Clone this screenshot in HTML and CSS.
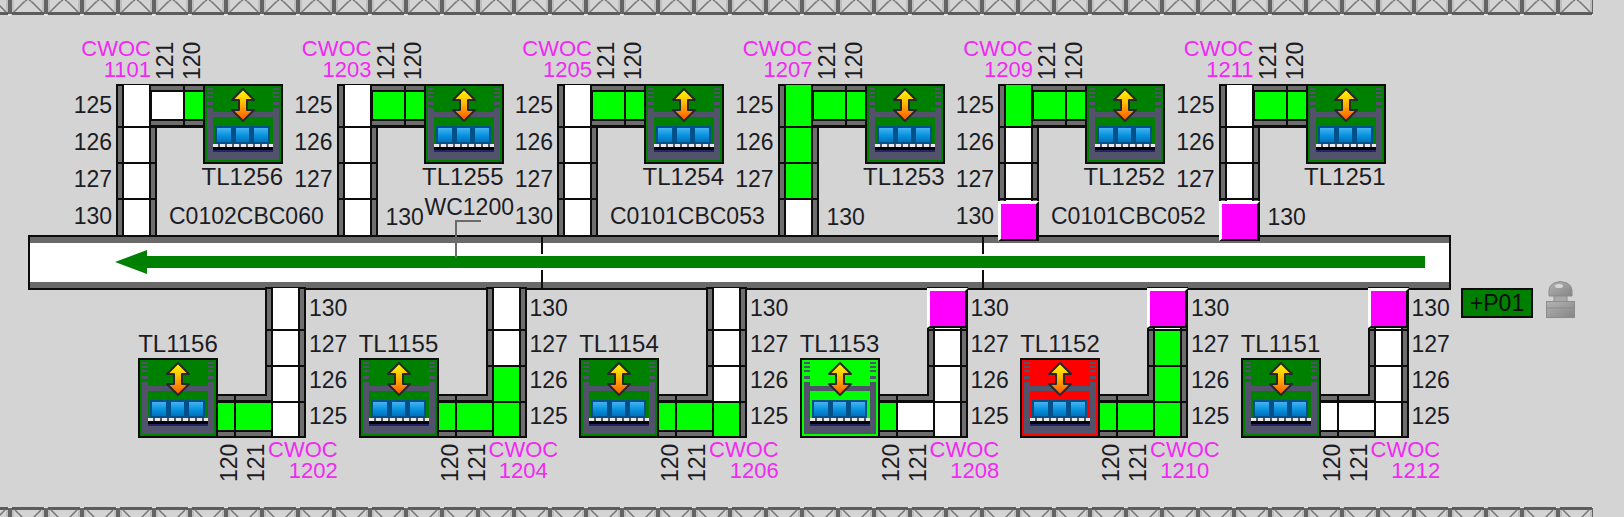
FILE: index.html
```html
<!DOCTYPE html>
<html lang="en">
<head>
<meta charset="utf-8">
<title>Conveyor WC1200 overview</title>
<link rel="stylesheet" href="styles.css">
</head>
<body>
<svg class="defs" aria-hidden="true">
  <defs>
    <linearGradient id="arrow-fill" x1="0" y1="0" x2="0" y2="1"><stop offset="0.1" stop-color="#fff000"/><stop offset="0.5" stop-color="#ffb000"/><stop offset="0.9" stop-color="#ff6400"/></linearGradient>
    <linearGradient id="box-fill" x1="0" y1="0" x2="0" y2="1"><stop offset="0" stop-color="#45b4f2"/><stop offset="0.5" stop-color="#0a94e0"/><stop offset="1" stop-color="#0070bc"/></linearGradient>
    <linearGradient id="lamp-fill" x1="0" y1="0" x2="1" y2="1"><stop offset="0" stop-color="#b4b4b4"/><stop offset="1" stop-color="#858585"/></linearGradient>
    <pattern id="fence-top" x="8" y="0" width="36" height="16" patternUnits="userSpaceOnUse">
      <rect x="0" width="4" height="14" fill="#646464"/>
      <rect x="4" y="12" width="32" height="3" fill="#5c5c5c"/>
      <path d="M5 0V12M35 0V12" stroke="#a8a8a8" stroke-width="1"/>
      <path d="M6 12L16 2H17M34 12L24 2H23M17 1L19 0M23 1L21 0" stroke="#777" stroke-width="1.5" fill="none"/>
      <rect x="0" y="14" width="3" height="2" fill="#e6e6e6"/>
    </pattern>
    <pattern id="fence-bottom" x="8" y="0" width="36" height="12" patternUnits="userSpaceOnUse">
      <rect x="0" y="1" width="4" height="11" fill="#646464"/>
      <rect x="4" y="0" width="32" height="3" fill="#5c5c5c"/>
      <path d="M5 3V12M35 3V12" stroke="#a8a8a8" stroke-width="1"/>
      <path d="M7 3L16 12M33 3L24 12" stroke="#777" stroke-width="1.5" fill="none"/>
      <rect x="0" y="0" width="3" height="1" fill="#e6e6e6"/>
    </pattern>
    <symbol id="pipe-up" viewBox="0 0 88 151">
      <path fill="#0c0c0c" d="M0 0H88V44H41V151H0Z"/>
      <path fill="#6e6e6e" d="M2 2H6V151H2ZM35 44H39V151H35ZM35 2H88V6H35ZM35 37H88V41H35Z"/>
      <path fill="#fff" d="M8 1H33V151H8ZM36 8H88V35H36Z"/>
      <path fill="#0c0c0c" d="M0 42H41V44H0ZM0 78H41V80H0ZM0 114H41V116H0ZM67 0H69V44H67Z"/>
    </symbol>
    <symbol id="pipe-down" viewBox="0 0 88 151">
      <path fill="#0c0c0c" d="M47 0H88V151H0V107H47Z"/>
      <path fill="#6e6e6e" d="M49 2H53V109H49ZM82 2H86V149H82ZM0 109H53V113H0ZM0 145H53V149H0Z"/>
      <path fill="#fff" d="M55 1H80V149H55ZM0 116H53V143H0Z"/>
      <path fill="#0c0c0c" d="M47 42H88V44H47ZM47 78H88V80H47ZM47 114H88V116H47ZM16 107H18V151H16Z"/>
    </symbol>
    <symbol id="block" viewBox="0 0 41 40">
      <rect width="41" height="40" fill="#0c0c0c"/>
      <path fill="#fff" d="M0 0H41L38 3H3V38L0 40Z"/>
      <rect x="3" y="3" width="35" height="35" fill="#f0f"/>
    </symbol>
    <symbol id="lift" viewBox="0 0 80 80">
      <rect x="1" y="1" width="78" height="78" fill="currentColor" stroke="#0c0c0c" stroke-width="2"/>
      <path fill="#52526a" d="M4 24H10V67H70V24H76V76H4ZM10 28H70V33H10ZM4 4H10V6H4ZM4 8H10V10H4ZM4 12H10V14H4ZM4 18H10V21H4ZM70 4H76V6H70ZM70 8H76V10H70ZM70 12H76V14H70ZM70 18H76V21H70Z"/>
      <rect x="12" y="42" width="55" height="18" fill="#00508a"/>
      <path fill="url(#box-fill)" d="M14 44H28V58H14ZM33 44H46V58H33ZM51 44H65V58H51Z"/>
      <rect x="10" y="60" width="60" height="3" fill="#52526a"/>
      <path stroke="#e8e8e8" stroke-width="3" stroke-dasharray="5 2" d="M10 61.500H70"/>
      <rect x="10" y="63" width="60" height="3" fill="#000"/>
      <rect x="10" y="66" width="60" height="2" fill="#202468"/>
      <path fill="url(#arrow-fill)" stroke="#28282c" stroke-width="2" stroke-linejoin="round" d="M40 5L51 16H44V26H51L40 37L29 26H36V16H29Z"/>
    </symbol>
  </defs>
</svg>

<main class="plant">
  <svg class="fence fence--top" aria-hidden="true"><rect width="100%" height="16" fill="url(#fence-top)"/></svg>

  <section class="row row--upper">
    <article class="station station--upper">
      <header class="head"><p class="order">CWOC<br>1101</p><span class="turned">121</span><span class="turned">120</span></header>
      <ol class="cells"><li>125</li><li>126</li><li>127</li><li>130</li></ol>
      <svg class="pipe" viewBox="0 0 88 151"><use href="#pipe-up" width="88" height="151"/><path class="on" d="M69 8h19v27h-19z"/></svg>
      <div class="unit"><svg class="lift"><use href="#lift"/></svg><h2 class="name">TL1256</h2></div>
      <p class="foot foot--section">C0102CBC060</p>
    </article>
    <article class="station station--upper">
      <header class="head"><p class="order">CWOC<br>1203</p><span class="turned">121</span><span class="turned">120</span></header>
      <ol class="cells"><li>125</li><li>126</li><li>127</li></ol>
      <svg class="pipe" viewBox="0 0 88 151"><use href="#pipe-up" width="88" height="151"/><path class="on" d="M36 8h31v27h-31zM69 8h19v27h-19z"/></svg>
      <div class="unit"><svg class="lift"><use href="#lift"/></svg><h2 class="name">TL1255</h2></div>
      <p class="foot">130</p>
      <div class="callout">WC1200<svg class="leader" viewBox="0 0 26 38"><path d="M26 1H1V38" fill="none" stroke="#6a6a6a" stroke-width="2"/></svg></div>
    </article>
    <article class="station station--upper">
      <header class="head"><p class="order">CWOC<br>1205</p><span class="turned">121</span><span class="turned">120</span></header>
      <ol class="cells"><li>125</li><li>126</li><li>127</li><li>130</li></ol>
      <svg class="pipe" viewBox="0 0 88 151"><use href="#pipe-up" width="88" height="151"/><path class="on" d="M36 8h31v27h-31zM69 8h19v27h-19z"/></svg>
      <div class="unit"><svg class="lift"><use href="#lift"/></svg><h2 class="name">TL1254</h2></div>
      <p class="foot foot--section">C0101CBC053</p>
    </article>
    <article class="station station--upper">
      <header class="head"><p class="order">CWOC<br>1207</p><span class="turned">121</span><span class="turned">120</span></header>
      <ol class="cells"><li>125</li><li>126</li><li>127</li></ol>
      <svg class="pipe" viewBox="0 0 88 151"><use href="#pipe-up" width="88" height="151"/><path class="on" d="M8 1h25v41h-25zM8 44h25v34h-25zM8 80h25v34h-25zM36 8h31v27h-31zM69 8h19v27h-19z"/></svg>
      <div class="unit"><svg class="lift"><use href="#lift"/></svg><h2 class="name">TL1253</h2></div>
      <p class="foot">130</p>
    </article>
    <article class="station station--upper">
      <header class="head"><p class="order">CWOC<br>1209</p><span class="turned">121</span><span class="turned">120</span></header>
      <ol class="cells"><li>125</li><li>126</li><li>127</li><li>130</li></ol>
      <svg class="pipe" viewBox="0 0 88 151"><use href="#pipe-up" width="88" height="151"/><path class="on" d="M8 1h25v41h-25zM36 8h31v27h-31zM69 8h19v27h-19z"/><use href="#block" y="117" width="41" height="40"/></svg>
      <div class="unit"><svg class="lift"><use href="#lift"/></svg><h2 class="name">TL1252</h2></div>
      <p class="foot foot--section">C0101CBC052</p>
    </article>
    <article class="station station--upper">
      <header class="head"><p class="order">CWOC<br>1211</p><span class="turned">121</span><span class="turned">120</span></header>
      <ol class="cells"><li>125</li><li>126</li><li>127</li></ol>
      <svg class="pipe" viewBox="0 0 88 151"><use href="#pipe-up" width="88" height="151"/><path class="on" d="M36 8h31v27h-31zM69 8h19v27h-19z"/><use href="#block" y="117" width="41" height="40"/></svg>
      <div class="unit"><svg class="lift"><use href="#lift"/></svg><h2 class="name">TL1251</h2></div>
      <p class="foot">130</p>
    </article>
  </section>

  <section class="belt" aria-label="WC1200">
    <div class="belt-part belt-part--a"></div>
    <div class="belt-part belt-part--b"></div>
    <div class="belt-part belt-part--c"></div>
    <div class="flow">
      <svg class="flow-head" viewBox="0 0 32 24"><path d="M0 12L32 0V24Z" fill="#008000"/></svg>
      <div class="flow-line"></div>
    </div>
  </section>

  <section class="lower">
    <div class="row row--lower">
      <article class="station station--lower">
        <h2 class="name">TL1156</h2>
        <svg class="lift"><use href="#lift"/></svg>
        <svg class="pipe" viewBox="0 0 88 151"><use href="#pipe-down" width="88" height="151"/><path class="on" d="M0 116h16v27h-16zM18 116h35v27h-35z"/></svg>
        <ol class="cells"><li>130</li><li>127</li><li>126</li><li>125</li></ol>
        <footer class="tail"><span class="turned">120</span><span class="turned">121</span><p class="order">CWOC<br>1202</p></footer>
      </article>
      <article class="station station--lower">
        <h2 class="name">TL1155</h2>
        <svg class="lift"><use href="#lift"/></svg>
        <svg class="pipe" viewBox="0 0 88 151"><use href="#pipe-down" width="88" height="151"/><path class="on" d="M0 116h16v27h-16zM18 116h35v27h-35zM55 80h25v34h-25zM55 116h25v33h-25z"/></svg>
        <ol class="cells"><li>130</li><li>127</li><li>126</li><li>125</li></ol>
        <footer class="tail"><span class="turned">120</span><span class="turned">121</span><p class="order order--centred">CWOC<br>1204</p></footer>
      </article>
      <article class="station station--lower">
        <h2 class="name">TL1154</h2>
        <svg class="lift"><use href="#lift"/></svg>
        <svg class="pipe" viewBox="0 0 88 151"><use href="#pipe-down" width="88" height="151"/><path class="on" d="M0 116h16v27h-16zM18 116h35v27h-35zM55 116h25v33h-25z"/></svg>
        <ol class="cells"><li>130</li><li>127</li><li>126</li><li>125</li></ol>
        <footer class="tail"><span class="turned">120</span><span class="turned">121</span><p class="order">CWOC<br>1206</p></footer>
      </article>
      <article class="station station--lower">
        <h2 class="name">TL1153</h2>
        <svg class="lift lift--active"><use href="#lift"/></svg>
        <svg class="pipe" viewBox="0 0 88 151"><use href="#pipe-down" width="88" height="151"/><path class="on" d="M0 116h16v27h-16z"/><use href="#block" x="47" y="1" width="41" height="40"/></svg>
        <ol class="cells"><li>130</li><li>127</li><li>126</li><li>125</li></ol>
        <footer class="tail"><span class="turned">120</span><span class="turned">121</span><p class="order">CWOC<br>1208</p></footer>
      </article>
      <article class="station station--lower">
        <h2 class="name">TL1152</h2>
        <svg class="lift lift--fault"><use href="#lift"/></svg>
        <svg class="pipe" viewBox="0 0 88 151"><use href="#pipe-down" width="88" height="151"/><path class="on" d="M0 116h16v27h-16zM18 116h35v27h-35zM55 44h25v34h-25zM55 80h25v34h-25zM55 116h25v33h-25z"/><use href="#block" x="47" y="1" width="41" height="40"/></svg>
        <ol class="cells"><li>130</li><li>127</li><li>126</li><li>125</li></ol>
        <footer class="tail"><span class="turned">120</span><span class="turned">121</span><p class="order order--centred">CWOC<br>1210</p></footer>
      </article>
      <article class="station station--lower">
        <h2 class="name">TL1151</h2>
        <svg class="lift"><use href="#lift"/></svg>
        <svg class="pipe" viewBox="0 0 88 151"><use href="#pipe-down" width="88" height="151"/><use href="#block" x="47" y="1" width="41" height="40"/></svg>
        <ol class="cells"><li>130</li><li>127</li><li>126</li><li>125</li></ol>
        <footer class="tail"><span class="turned">120</span><span class="turned">121</span><p class="order">CWOC<br>1212</p></footer>
      </article>
    </div>
    <aside class="panel">
      <button class="panel-tag" type="button">+P01</button>
      <svg class="lamp" viewBox="0 0 29 37" role="img" aria-label="Beacon">
        <path d="M3 15V9Q3 5 8 2Q14 -1 21 2Q26 5 26 9V15Z" fill="url(#lamp-fill)" stroke="#8c8c8c"/>
        <ellipse cx="13" cy="5" rx="4" ry="2" fill="#d8d8d8"/>
        <rect x="8" y="15" width="13" height="6" fill="#a8a8a8" stroke="#8c8c8c"/>
        <rect x="0.500" y="20.500" width="28" height="16" fill="url(#lamp-fill)" stroke="#8c8c8c"/>
        <path d="M1 27H28" stroke="#8a8a8a"/>
      </svg>
    </aside>
  </section>

  <svg class="fence fence--bottom" aria-hidden="true"><rect width="100%" height="12" fill="url(#fence-bottom)"/></svg>
</main>
</body>
</html>
```
FILE: styles.css
```css
* {
  box-sizing: border-box;
}

body {
  margin: 0;
  background: #d4d4d4;
  color: #1c1c24;
  font: 23px/26px "Liberation Sans", Arial, sans-serif;
  overflow: hidden;
}

p, h2, ol {
  margin: 0;
  padding: 0;
  font: inherit;
  list-style: none;
}

svg {
  display: block;
}

.defs {
  position: absolute;
  width: 0;
  height: 0;
}

.plant {
  display: flex;
  flex-direction: column;
}

.fence {
  width: calc(100% - 31px);
  height: 16px;
}

.fence--bottom {
  height: 10px;
  margin-top: 25px;
}

.row {
  display: grid;
  grid-template-columns: repeat(6, 1fr);
  position: relative;
  z-index: 1;
}

.row--upper {
  padding: 22px 229px 0 72px;
}

.station {
  display: grid;
  position: relative;
  white-space: nowrap;
}

.station--upper {
  grid-template-columns: 44px 41px 46px 80px;
  grid-template-rows: 46px 151px;
}

.head {
  grid-area: 1 / 1 / 2 / 5;
  display: flex;
  gap: 7px;
}

.order {
  color: #f328f3;
  font-size: 22px;
  line-height: 21px;
  text-align: right;
}

.head .order {
  width: 79px;
  margin-right: -3px;
}

.order--centred {
  text-align: center;
}

.turned {
  writing-mode: vertical-rl;
  transform: rotate(180deg);
  line-height: 20px;
}

.head .turned {
  padding-top: 4px;
}

.cells {
  line-height: 36px;
}

.station--upper .cells {
  grid-area: 2 / 1;
  padding: 3px 4px 0 0;
  line-height: 37px;
  text-align: right;
}

.pipe {
  width: 88px;
  height: 151px;
  overflow: visible;
}

.on {
  fill: #00ff00;
}

.station--upper .pipe {
  grid-area: 2 / 2;
}

.unit {
  grid-area: 2 / 4;
  position: relative;
}

.lift {
  width: 80px;
  height: 80px;
  color: #008000;
}

.lift--active {
  color: #00ff00;
}

.lift--fault {
  color: #ff0000;
}

.name {
  font-size: 24px;
  text-align: center;
}

.unit .name {
  display: flex;
  justify-content: flex-end;
}

.foot {
  grid-area: 2 / 3 / 3 / 5;
  align-self: end;
  padding-left: 8px;
  line-height: 36px;
}

.foot--section {
  padding-left: 12px;
  padding-bottom: 1px;
}

.callout {
  position: absolute;
  left: 132px;
  top: 156px;
}

.leader {
  width: 26px;
  height: 38px;
  margin-left: 30px;
}

.belt {
  display: flex;
  position: relative;
  height: 55px;
  margin: 0 173px 0 28px;
  border: 2px solid #0c0c0c;
}

.belt-part {
  border-style: solid;
  border-color: #6a6a6a;
  border-width: 6px 0;
  background: #fff;
  position: relative;
}

.belt-part--a {
  flex: 512;
}

.belt-part--b {
  flex: 441;
}

.belt-part--c {
  flex: 468;
}

.belt-part + .belt-part::before {
  content: "";
  position: absolute;
  inset: -6px auto -6px 0;
  width: 2px;
  background: #0c0c0c;
}

.flow {
  position: absolute;
  inset: 13px 24px auto 85px;
  display: flex;
  align-items: center;
}

.flow-head {
  width: 32px;
  height: 24px;
}

.flow-line {
  flex: 1;
  height: 16px;
  border: solid #fff;
  border-width: 2px 0;
  background: #008000;
}

.lower {
  display: flex;
  margin-top: -3px;
}

.row--lower {
  flex: 1;
  padding-left: 138px;
}

.station--lower {
  grid-template-columns: 80px 88px 1fr;
  grid-template-rows: 71px 80px 44px;
}

.station--lower .name {
  grid-area: 1 / 1;
  align-self: end;
  padding-bottom: 1px;
}

.station--lower .lift {
  grid-area: 2 / 1;
}

.station--lower .pipe {
  grid-area: 1 / 2 / 3 / 3;
}

.station--lower .cells {
  grid-area: 1 / 3 / 3 / 4;
  padding: 3px 0 0 3px;
}

.tail {
  grid-area: 3 / 2 / 4 / 4;
  display: flex;
  gap: 7px;
  padding-left: 1px;
}

.tail .order {
  margin-left: -5px;
  padding-top: 1px;
}

.tail .turned {
  padding-bottom: 5px;
}

.panel {
  display: flex;
  align-items: flex-end;
  gap: 13px;
  width: 163px;
  height: 31px;
}

.panel-tag {
  width: 72px;
  height: 30px;
  padding: 0;
  border: 2px solid #0c0c0c;
  background: #008000;
  color: #0c0c0c;
  font: inherit;
}

.lamp {
  width: 29px;
  height: 37px;
}
```
